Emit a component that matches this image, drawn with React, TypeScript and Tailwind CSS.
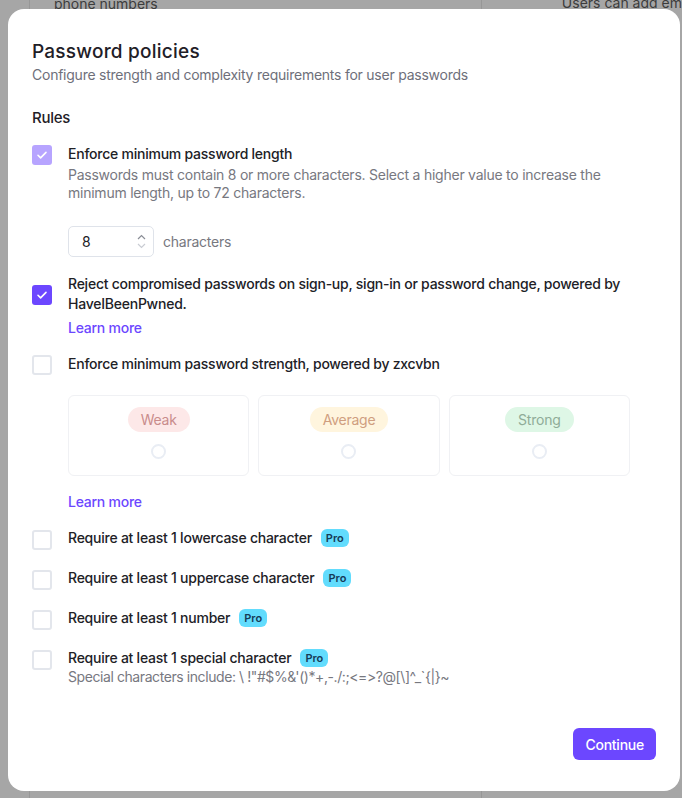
import React from "react";

const Check = ({ className }: { className?: string }) => (
  <svg viewBox="0 0 20 20" className={className} fill="none">
    <path d="M6 10.3l2.6 2.6L14 7.4" stroke="white" strokeWidth="1.6" strokeLinecap="round" strokeLinejoin="round" />
  </svg>
);

function Box({ state }: { state: "off" | "on" | "disabled" }) {
  if (state === "off")
    return <div className="w-5 h-5 shrink-0 rounded-[3px] border-2 border-[#e3e6ec] bg-white" />;
  return (
    <div
      className={`w-5 h-5 shrink-0 rounded-[3px] flex items-center justify-center ${
        state === "on" ? "bg-[#6c47ff]" : "bg-[#b7a4ff]"
      }`}
    >
      <Check className="w-5 h-5" />
    </div>
  );
}

function Pro() {
  return (
    <span className="ml-[9px] inline-flex items-center h-[18px] px-[5px] rounded-[6px] bg-[#62dcfd] text-[11px] font-semibold text-[#163b57] leading-none tracking-normal">
      Pro
    </span>
  );
}

function ProRow({ label, children }: { label: string; children?: React.ReactNode }) {
  return (
    <div className="flex gap-4">
      <div className="pt-[2px]">
        <Box state="off" />
      </div>
      <div className="flex flex-col">
        <div className="flex items-center h-5">
          <span className="text-[14px] font-medium text-[#212126] leading-5">{label}</span>
          <Pro />
        </div>
        {children}
      </div>
    </div>
  );
}

function StrengthCard({ label, bg, fg }: { label: string; bg: string; fg: string }) {
  return (
    <div className="h-[81px] rounded-[6px] border border-[#f0f1f4] flex flex-col items-center pt-[11px]">
      <span className={`h-[25px] px-[13px] rounded-full flex items-center text-[14px] leading-none ${bg} ${fg}`}>
        {label}
      </span>
      <div className="mt-[12px] w-[15px] h-[15px] rounded-full border-2 border-[#e9edf4]" />
    </div>
  );
}

export default function App() {
  return (
    <div
      className="relative w-[682px] h-[798px] overflow-hidden bg-[#a6a6a6]"
      style={{ fontFamily: "Inter, 'Noto Sans', sans-serif" }}
    >
      {/* background page */}
      <div className="flex h-full">
        <div className="w-[29px] h-full" />
        <div className="w-[454px] h-full border-l border-r border-[#979797]">
          <div className="pl-[24px] -mt-[6px] text-[14px] leading-5 text-[#3c3c3c]">phone numbers</div>
        </div>
        <div className="flex-1 h-full">
          <div className="pl-[80px] -mt-[7px] text-[14px] leading-5 text-[#3c3c3c] whitespace-nowrap">Users can add em</div>
        </div>
      </div>

      {/* modal */}
      <div className="absolute left-[8px] top-[9px] w-[672px] h-[782px] rounded-[16px] bg-white px-6 pt-[30px] tracking-[-0.015em] [font-feature-settings:'calt'_0,'liga'_0]">
        <h1 className="text-[19px] leading-[26px] font-medium text-[#1f2027] tracking-[0.012em]">Password policies</h1>
        <p className="text-[14px] leading-5 text-[#6e6f7a]">
          Configure strength and complexity requirements for user passwords
        </p>

        <h2 className="mt-[22px] text-[15px] leading-[22px] font-medium text-[#1f2027]">Rules</h2>

        {/* item 1 */}
        <div className="mt-[15px] flex gap-4">
          <div className="pt-[1px]">
            <Box state="disabled" />
          </div>
          <div className="flex flex-col">
            <span className="text-[14px] leading-5 font-medium text-[#212126]">Enforce minimum password length</span>
            <p className="mt-[2px] text-[14px] leading-[18px] text-[#77787f]">
              Passwords must contain 8 or more characters. Select a higher value to increase the
              <br />
              minimum length, up to 72 characters.
            </p>
            <div className="mt-6 flex items-center gap-[9px]">
              <div className="w-[86px] h-[31px] rounded-[5px] border border-[#dfe3ea] flex items-center justify-between pl-[13px] pr-[7px]">
                <span className="text-[14px] text-[#212126]">8</span>
                <div className="flex flex-col items-center gap-[3px]">
                  <svg width="9" height="6" viewBox="0 0 9 6" fill="none">
                    <path d="M1 5l3.5-3.5L8 5" stroke="#8a8d96" strokeWidth="1.2" />
                  </svg>
                  <svg width="9" height="6" viewBox="0 0 9 6" fill="none">
                    <path d="M1 1l3.5 3.5L8 1" stroke="#c9ccd3" strokeWidth="1.2" />
                  </svg>
                </div>
              </div>
              <span className="text-[14px] text-[#77787f]">characters</span>
            </div>
          </div>
        </div>

        {/* item 2 */}
        <div className="mt-[17px] flex flex-col">
          <div className="flex items-center gap-4">
            <div className="pt-[2px]">
              <Box state="on" />
            </div>
            <span className="text-[14px] leading-5 font-medium text-[#212126]">
              Reject compromised passwords on sign-up, sign-in or password change, powered by
              <br />
              HaveIBeenPwned.
            </span>
          </div>
          <a className="ml-[36px] mt-1 text-[14px] leading-5 font-medium text-[#6c47ff]">Learn more</a>
        </div>

        {/* item 3 */}
        <div className="mt-[16px] flex gap-4">
          <div className="pt-[1px]">
            <Box state="off" />
          </div>
          <span className="text-[14px] leading-5 font-medium text-[#212126]">
            Enforce minimum password strength, powered by zxcvbn
          </span>
        </div>
        <div className="ml-[36px] mt-5 w-[562px] grid grid-cols-3 gap-[9px]">
          <StrengthCard label="Weak" bg="bg-[#fde8e8]" fg="text-[#c98c8c]" />
          <StrengthCard label="Average" bg="bg-[#fff5de]" fg="text-[#cf9e80]" />
          <StrengthCard label="Strong" bg="bg-[#def7e6]" fg="text-[#8fac98]" />
        </div>
        <a className="block ml-[36px] mt-4 text-[14px] leading-5 font-medium text-[#6c47ff]">Learn more</a>

        {/* pro rows */}
        <div className="mt-[16px] flex flex-col gap-[18px]">
          <ProRow label="Require at least 1 lowercase character" />
          <ProRow label="Require at least 1 uppercase character" />
          <ProRow label="Require at least 1 number" />
          <ProRow label="Require at least 1 special character">
            <p className="text-[14px] leading-[18px] text-[#77787f] tracking-[-0.03em]">
              {"Special characters include: \\ !\"#$%&'()*+,-./:;<=>?@[\\]^_`{|}~"}
            </p>
          </ProRow>
        </div>

        <div className="mt-[42px] flex justify-end">
          <button className="h-8 px-3 rounded-[6px] bg-[#6c47ff] text-white text-[14px] font-medium">
            Continue
          </button>
        </div>
      </div>
    </div>
  );
}
